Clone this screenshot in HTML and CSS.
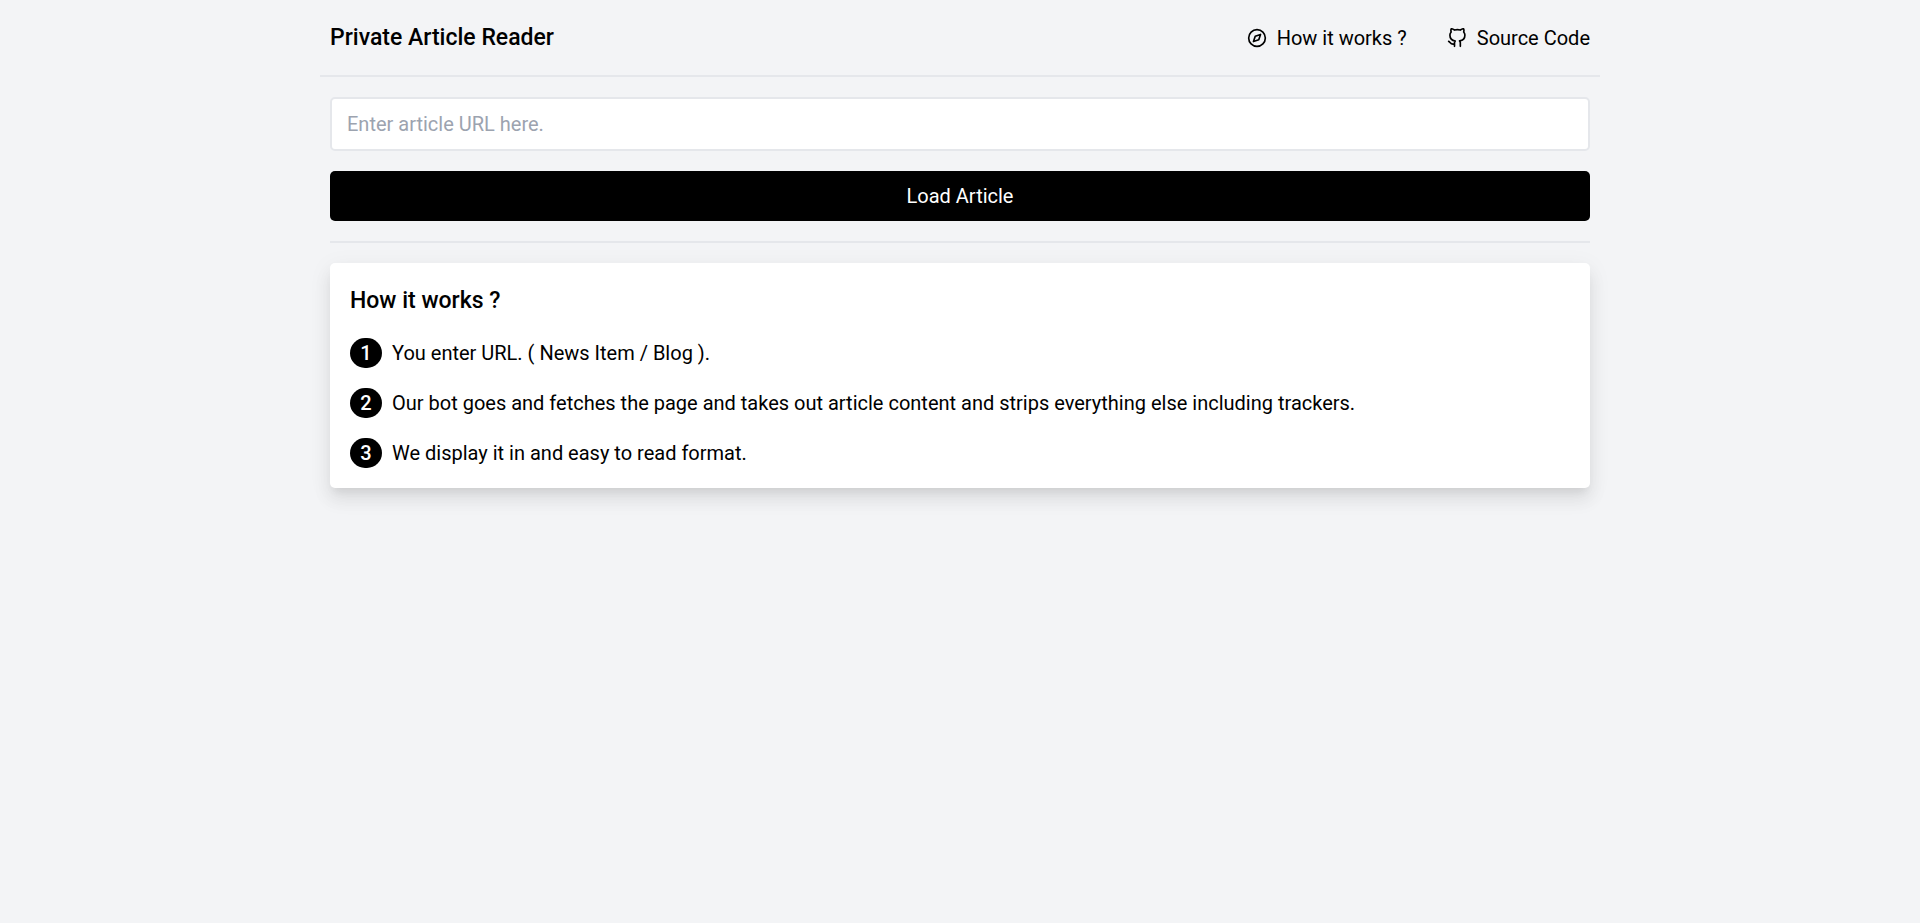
FILE: index.html
```html
<!DOCTYPE html>
<html lang="en">
<head>
<meta charset="utf-8">
<meta name="viewport" content="width=device-width, initial-scale=1">
<title>Private Article Reader</title>
<link rel="stylesheet" href="styles.css">
</head>
<body>
<div class="container">
  <header class="header">
    <h1 class="title">Private Article Reader</h1>
    <nav class="nav">
      <a class="nav-link" href="#how">
        <svg class="icon" viewBox="0 0 24 24" aria-hidden="true"><circle cx="12" cy="12" r="10"/><polygon points="16.24 7.76 14.12 14.12 7.76 16.24 9.88 9.88 16.24 7.76"/></svg>
        <span>How it works ?</span>
      </a>
      <a class="nav-link" href="#source">
        <svg class="icon" viewBox="0 0 24 24" aria-hidden="true"><path d="M9 19c-5 1.5-5-2.5-7-3m14 6v-3.87a3.37 3.37 0 0 0-.94-2.61c3.14-.35 6.44-1.54 6.44-7A5.44 5.44 0 0 0 20 4.77 5.07 5.07 0 0 0 19.91 1S18.73.65 16 2.48a13.38 13.38 0 0 0-7 0C6.27.65 5.09 1 5.09 1A5.07 5.07 0 0 0 5 4.77a5.44 5.44 0 0 0-1.5 3.78c0 5.42 3.3 6.61 6.44 7A3.37 3.37 0 0 0 9 18.13V22"/></svg>
        <span>Source Code</span>
      </a>
    </nav>
  </header>
  <main class="main">
    <form class="form">
      <input class="url-input" type="url" placeholder="Enter article URL here." aria-label="Article URL">
      <button class="load-button" type="button">Load Article</button>
    </form>
    <section class="card" id="how">
      <h2 class="title">How it works ?</h2>
      <ol class="steps">
        <li class="step"><span class="badge">1</span><span>You enter URL. ( News Item / Blog ).</span></li>
        <li class="step"><span class="badge">2</span><span>Our bot goes and fetches the page and takes out article content and strips everything else including trackers.</span></li>
        <li class="step"><span class="badge">3</span><span>We display it in and easy to read format.</span></li>
      </ol>
    </section>
  </main>
</div>
</body>
</html>
```
FILE: styles.css
```css
* {
  box-sizing: border-box;
}

body {
  min-height: 100vh;
  margin: 0;
  background: #f3f4f6;
  color: #000;
  font: 400 20px/30px Roboto, "Liberation Sans", sans-serif;
}

.container {
  max-width: 1280px;
  margin: 0 auto;
}

.header {
  display: flex;
  flex-wrap: wrap;
  align-items: center;
  justify-content: space-between;
  padding: 20px 10px;
  border-bottom: 2px solid #e5e7eb;
}

.title {
  margin: 0;
  font-size: 23px;
  font-weight: 500;
  line-height: 35px;
}

.nav {
  display: flex;
  gap: 40px;
}

.nav-link {
  display: flex;
  align-items: center;
  gap: 10px;
  color: inherit;
  text-decoration: none;
}

.icon {
  width: 20px;
  height: 20px;
  fill: none;
  stroke: currentColor;
  stroke-width: 2;
  stroke-linecap: round;
  stroke-linejoin: round;
}

.main {
  display: flex;
  flex-direction: column;
  gap: 20px;
  padding: 20px 10px 60px;
}

.form {
  display: flex;
  flex-direction: column;
  gap: 20px;
  padding-bottom: 20px;
  border-bottom: 2px solid #e5e7eb;
}

.url-input {
  width: 100%;
  padding: 10px 15px;
  border: 2px solid #e5e7eb;
  border-radius: 5px;
  background: #fff;
  color: inherit;
  font: inherit;
}

.url-input::placeholder {
  color: #9ca3af;
  opacity: 1;
}

.load-button {
  padding: 10px;
  border: 0;
  border-radius: 5px;
  background: #000;
  color: #fff;
  font: inherit;
}

.card {
  display: flex;
  flex-direction: column;
  gap: 20px;
  padding: 20px;
  border-radius: 5px;
  background: #fff;
  box-shadow: 0 7px 8px -4px rgba(0, 0, 0, 0.08), 0 12px 17px 2px rgba(0, 0, 0, 0.06), 0 5px 22px 4px rgba(0, 0, 0, 0.04);
}

.steps {
  display: flex;
  flex-direction: column;
  gap: 20px;
  margin: 0;
  padding: 0;
  list-style: none;
}

.step {
  display: flex;
  gap: 10px;
}

.badge {
  flex: none;
  align-self: flex-start;
  width: 32px;
  border-radius: 15px;
  background: #000;
  color: #fff;
  font-weight: 500;
  text-align: center;
}
```
